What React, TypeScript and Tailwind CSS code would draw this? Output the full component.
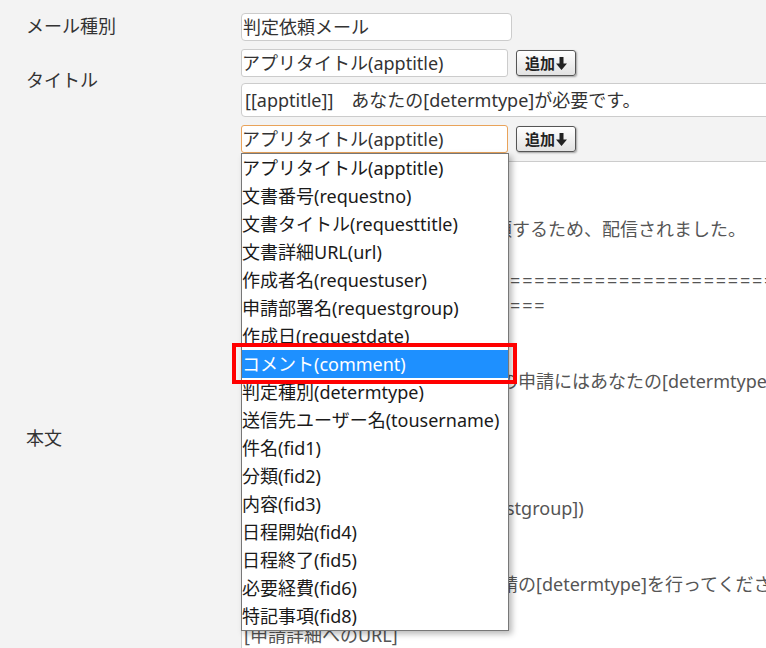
import React from "react";

const fieldItems = [
  "アプリタイトル(apptitle)",
  "文書番号(requestno)",
  "文書タイトル(requesttitle)",
  "文書詳細URL(url)",
  "作成者名(requestuser)",
  "申請部署名(requestgroup)",
  "作成日(requestdate)",
  "コメント(comment)",
  "判定種別(determtype)",
  "送信先ユーザー名(tousername)",
  "件名(fid1)",
  "分類(fid2)",
  "内容(fid3)",
  "日程開始(fid4)",
  "日程終了(fid5)",
  "必要経費(fid6)",
  "特記事項(fid8)",
];

const AddButton = () => (
  <button className="flex h-[26px] w-[60px] items-center justify-center gap-[1px] rounded-[3px] border border-[#555] bg-linear-to-b from-white to-[#e2e2e2] pt-[1px] text-[15px] font-bold leading-none text-[#222] shadow-[1px_1px_2px_rgba(0,0,0,0.35)]">
    追加
    <svg width="11" height="13" viewBox="0 0 11 13">
      <path d="M3.5 0h4v6.5h3.5L5.5 13 0 6.5h3.5z" fill="#222" />
    </svg>
  </button>
);

// 本文の一部はドロップダウンの裏に隠れる
const Clip = ({ w, children }: { w: string; children: React.ReactNode }) => (
  <span className={`inline-block overflow-hidden whitespace-nowrap align-top ${w}`}>{children}</span>
);

export default function App() {
  const eq = (n: number) => "=".repeat(n);

  return (
    <div className="relative h-[648px] w-[766px] overflow-hidden bg-[#f3f3f3] font-['Noto_Sans','Noto_Sans_CJK_JP',sans-serif] text-[18px] text-[#333]">
      <div className="grid grid-cols-[241px_1fr] gap-y-[8px] pt-[13px]">
        {/* メール種別 */}
        <div className="flex items-center pb-[3px] pl-[26px] leading-[22px]">メール種別</div>
        <div>
          <div className="h-[28px] w-[271px] rounded-[4px] border border-[#ccc] bg-white px-[1px] leading-[26px]">
            判定依頼メール
          </div>
        </div>

        {/* タイトル */}
        <div className="flex items-center pb-[6px] pl-[26px] leading-[22px]">タイトル</div>
        <div className="flex flex-col gap-[6px]">
          <div className="flex items-center gap-[8px]">
            <div className="h-[28px] w-[267px] rounded-[3px] border border-[#ccc] bg-white leading-[26px]">
              アプリタイトル(apptitle)
            </div>
            <AddButton />
          </div>
          <div className="h-[34px] w-[600px] whitespace-nowrap rounded-l-[4px] border border-[#ccc] bg-white px-[3px] leading-[32px]">
            [[apptitle]]　あなたの[determtype]が必要です。
          </div>
        </div>

        {/* 本文 */}
        <div className="flex items-center pl-[26px] leading-[22px]">本文</div>
        <div className="flex flex-col gap-[8px]">
          <div className="flex items-center gap-[8px]">
            <div className="relative z-10 h-[28px] w-[267px] rounded-[3px] border border-[#e9a35a] bg-white leading-[26px]">
              アプリタイトル(apptitle)
              <div className="absolute left-[-1px] top-[27px] w-[268px] border border-[#777] bg-white text-[#1a1a1a] shadow-[3px_3px_6px_rgba(0,0,0,0.28)]">
                {fieldItems.map((item, i) => (
                  <div
                    key={item}
                    className={
                      i === 7
                        ? "h-[28px] whitespace-nowrap bg-[#1e90ff] leading-[28px] text-white"
                        : "h-[28px] whitespace-nowrap leading-[28px]"
                    }
                  >
                    {item}
                  </div>
                ))}
                <div className="absolute left-[-10px] top-[189px] h-[41px] w-[285px] border-[4px] border-[#ff0000]" />
              </div>
            </div>
            <AddButton />
          </div>
          <div className="h-[590px] w-[600px] border border-[#ccc] bg-white pl-[2px] pt-[4px] leading-[25.4px] text-[#555]">
            <div className="whitespace-pre">[tousername] 様</div>
            <div className="h-[25.4px]" />
            <div className="whitespace-nowrap">
              <Clip w="w-[250px]">本申請文書について、判定を依</Clip>頼するため、配信されました。
            </div>
            <div className="h-[25.4px]" />
            <div className="whitespace-nowrap tracking-[1.8px]">{eq(60)}</div>
            <div className="whitespace-nowrap tracking-[1.8px]">{eq(25)}</div>
            <div>件名：[fid1]</div>
            <div>分類：[fid2]</div>
            <div className="whitespace-nowrap">
              <Clip w="w-[256px]">下記の文書は承認待ちです。 こ</Clip>の申請にはあなたの[determtype]が必要です。
            </div>
            <div className="h-[25.4px]" />
            <div>申請日：[requestdate]</div>
            <div>文書番号：[requestno]</div>
            <div>文書名：[requesttitle]</div>
            <div className="whitespace-nowrap">
              <Clip w="w-[262px]">申請者：[requestuser]([reque</Clip>stgroup])
            </div>
            <div className="h-[25.4px]" />
            <div>下記URLより内容を確認し、</div>
            <div className="whitespace-nowrap">
              <Clip w="w-[256px]">[requestuser]さんの申</Clip>請の[determtype]を行ってください。
            </div>
            <div className="h-[25.4px]" />
            <div>[申請詳細へのURL]</div>
            <div>[url]</div>
          </div>
        </div>
      </div>
    </div>
  );
}
